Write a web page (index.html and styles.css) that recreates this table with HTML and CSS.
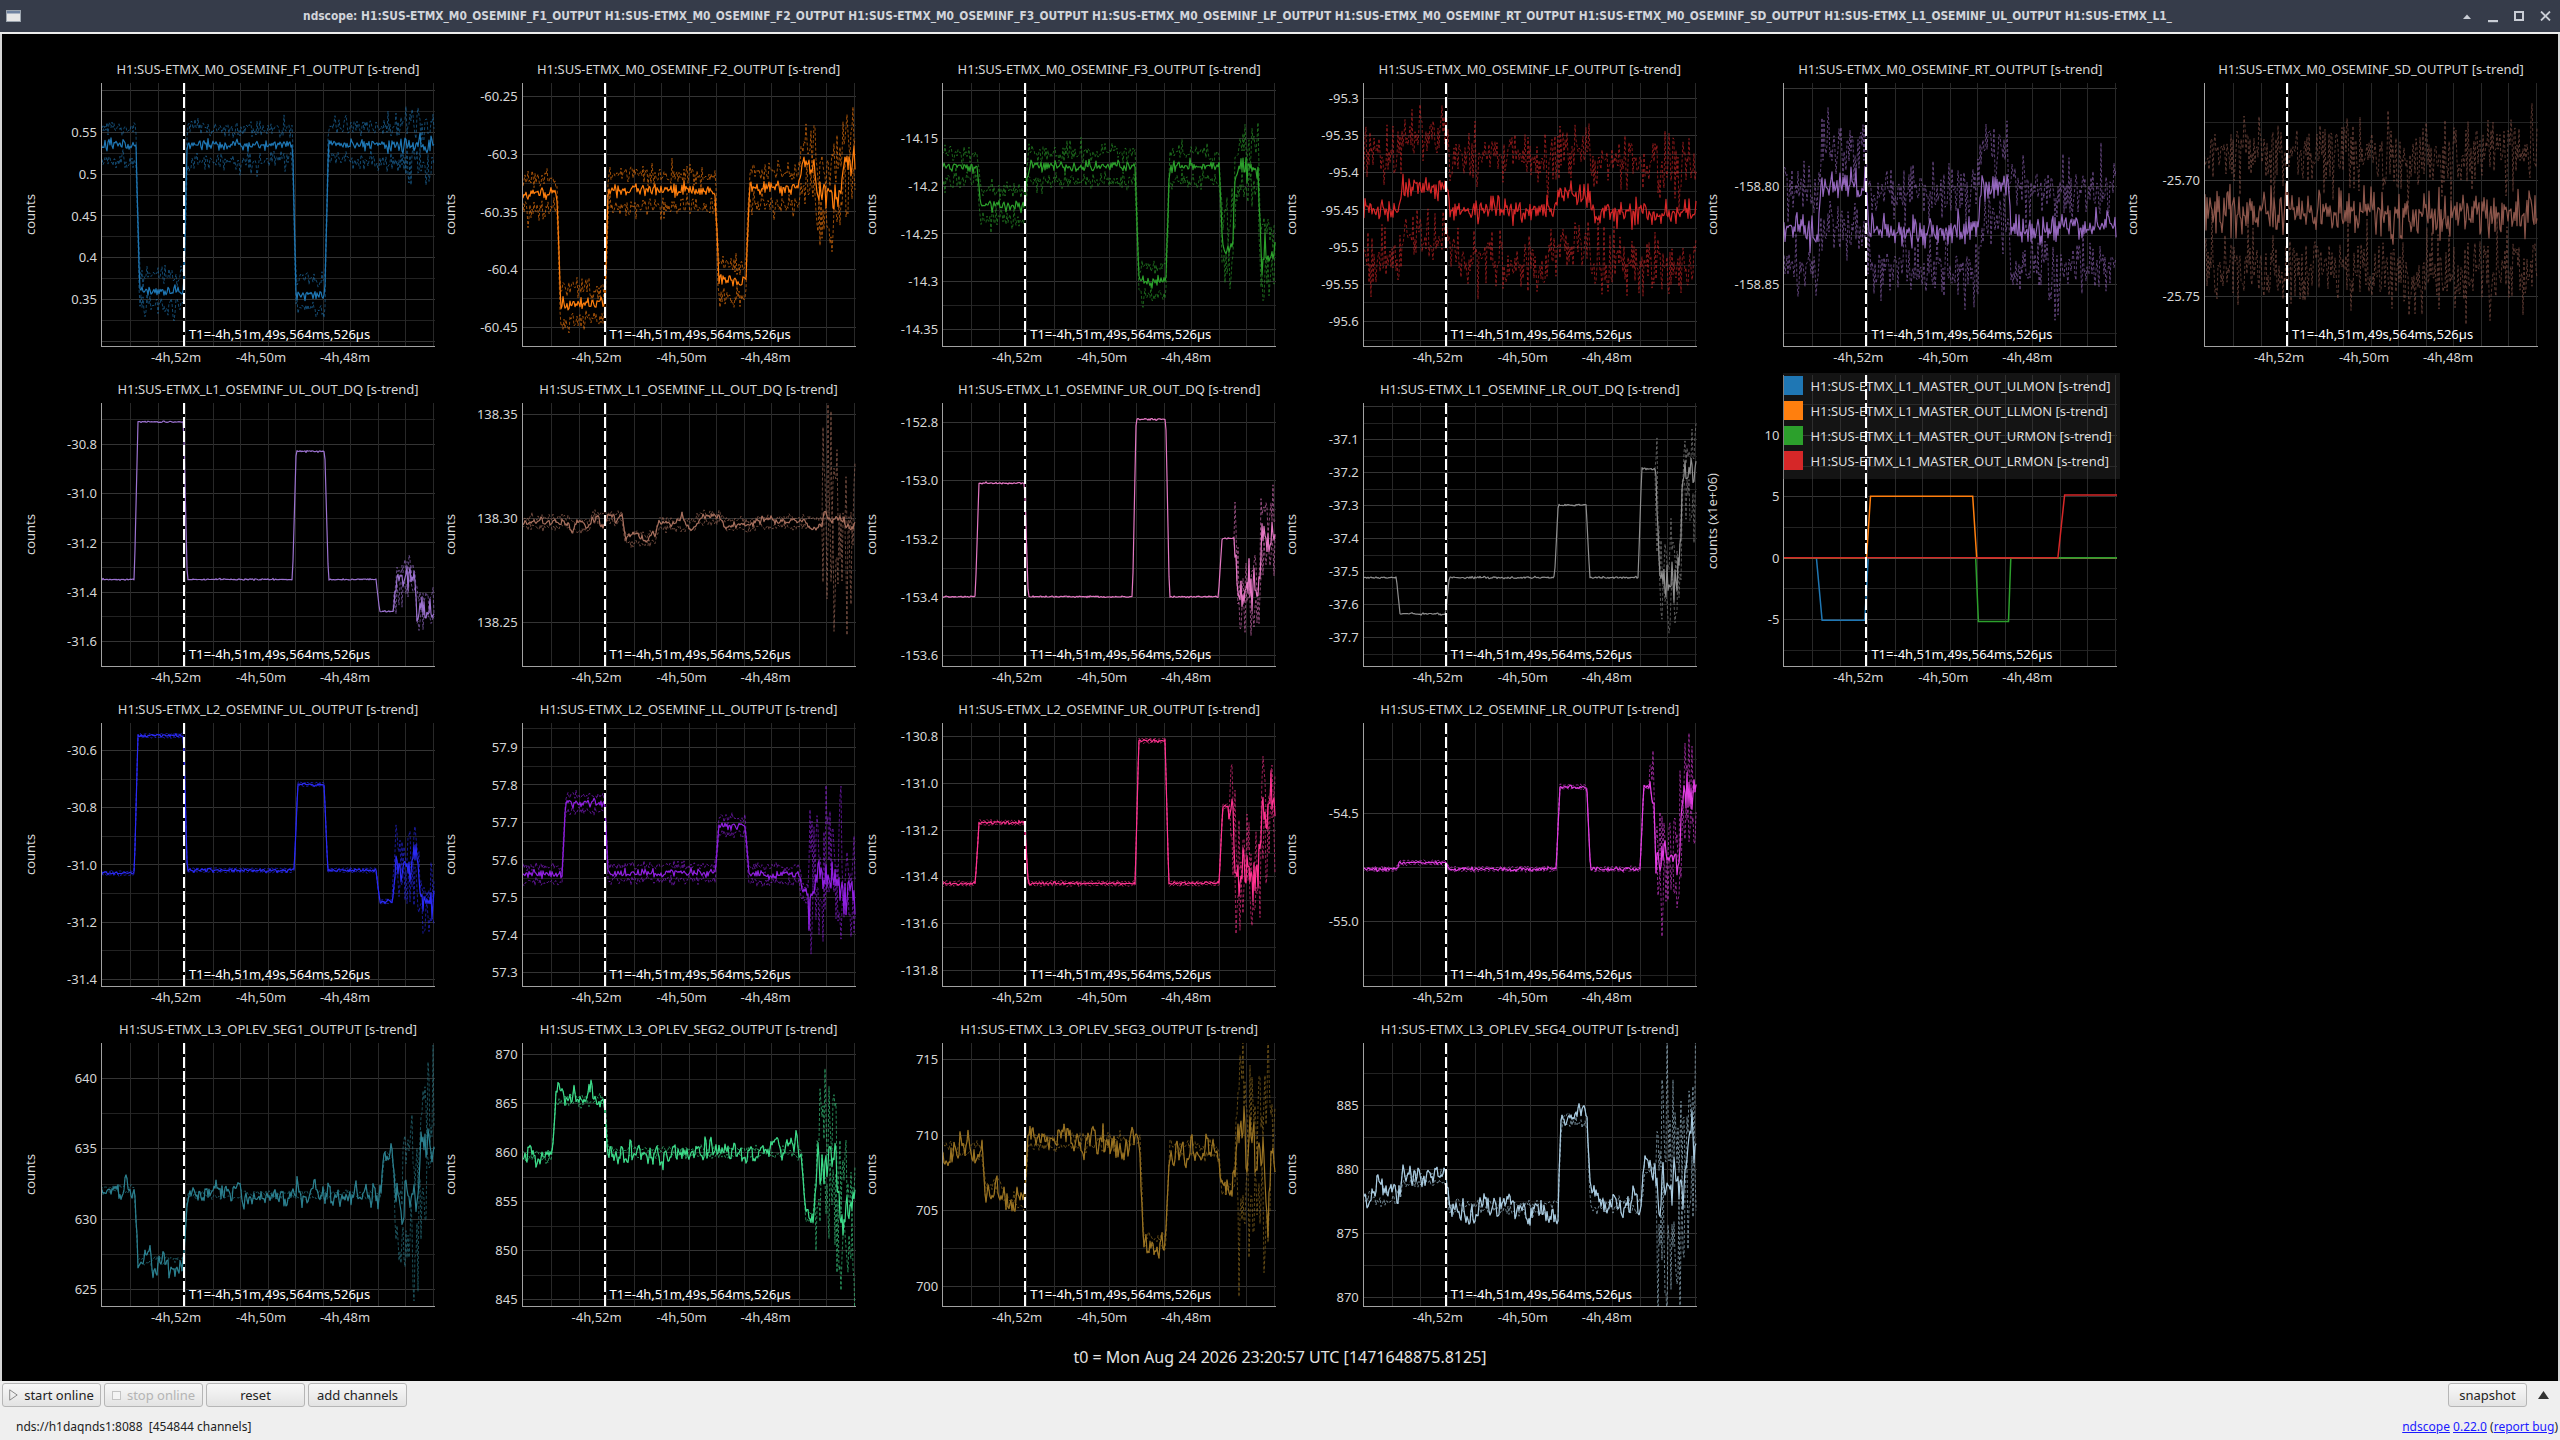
FILE: index.html
```html
<!DOCTYPE html>
<html lang="en">
<head>
<meta charset="utf-8">
<title>ndscope</title>
<link rel="stylesheet" href="styles.css">
</head>
<body>
<div class="window">
  <header class="titlebar">
    <svg class="appicon" width="15" height="12" viewBox="0 0 15 12"><rect x="0.5" y="0.5" width="14" height="11" fill="#e6e6e6" stroke="#9aa3ad"/><rect x="1" y="1" width="13" height="2.5" fill="#6f82a0"/></svg>
    <div class="wintitle">ndscope: H1:SUS-ETMX_M0_OSEMINF_F1_OUTPUT H1:SUS-ETMX_M0_OSEMINF_F2_OUTPUT H1:SUS-ETMX_M0_OSEMINF_F3_OUTPUT H1:SUS-ETMX_M0_OSEMINF_LF_OUTPUT H1:SUS-ETMX_M0_OSEMINF_RT_OUTPUT H1:SUS-ETMX_M0_OSEMINF_SD_OUTPUT H1:SUS-ETMX_L1_OSEMINF_UL_OUTPUT H1:SUS-ETMX_L1_</div>
    <div class="winbtns">
      <span class="wb"><svg width="8" height="5" viewBox="0 0 8 5"><path d="M0 5 L4 0.5 L8 5 Z" fill="#c9cdd5"/></svg></span>
      <span class="wb"><svg width="10" height="16" viewBox="0 0 10 16"><rect x="0" y="12" width="10" height="2.2" fill="#c9cdd5"/></svg></span>
      <span class="wb"><svg width="10" height="10" viewBox="0 0 10 10"><rect x="1" y="1" width="8" height="8" fill="none" stroke="#c9cdd5" stroke-width="2"/></svg></span>
      <span class="wb"><svg width="11" height="10" viewBox="0 0 11 10"><path d="M1 0.5 L10 9.5 M10 0.5 L1 9.5" stroke="#c9cdd5" stroke-width="1.8"/></svg></span>
    </div>
  </header>
  <div class="frameline"></div>
  <main class="scope">
    <div class="plots" id="plots"></div>
    <div class="t0">t0 = Mon Aug 24 2026 23:20:57 UTC [1471648875.8125]</div>
  </main>
  <div class="toolbar">
    <div class="tb-left">
      <button class="btn"><svg width="9" height="12" viewBox="0 0 9 12"><path d="M0.7 0.8 L8.2 6 L0.7 11.2 Z" fill="none" stroke="#8a8a8a" stroke-width="1"/></svg><span>start online</span></button>
      <button class="btn disabled"><svg width="9" height="9" viewBox="0 0 9 9"><rect x="0.5" y="0.5" width="8" height="8" fill="#f4f4f4" stroke="#c4c4c4"/></svg><span>stop online</span></button>
      <button class="btn"><span>reset</span></button>
      <button class="btn"><span>add channels</span></button>
    </div>
    <div class="tb-right">
      <button class="btn snap"><span>snapshot</span></button>
      <span class="uparrow"><svg width="11" height="8" viewBox="0 0 11 8"><path d="M0 8 L5.5 0 L11 8 Z" fill="#333"/></svg></span>
    </div>
  </div>
  <div class="status">
    <span class="server">nds://h1daqnds1:8088&nbsp; [454844 channels]</span>
    <span class="links"><a href="#">ndscope</a> <a href="#">0.22.0</a> (<a href="#">report bug</a>)</span>
  </div>
</div>
<script src="app.js"></script>
</body>
</html>
```

FILE: styles.css
```css
* { box-sizing: border-box; }
html, body { margin: 0; padding: 0; background: #000; }
body {
  width: 2560px; height: 1440px; overflow: hidden;
  font-family: "Noto Sans", "DejaVu Sans", sans-serif;
}
.window {
  width: 2560px; height: 1440px;
  display: flex; flex-direction: column;
  background: #d6d6d6;
}
.titlebar {
  height: 32px; flex: none;
  background: #363c4a;
  display: flex; align-items: center;
  color: #d2d5db;
}
.appicon { flex: none; margin-left: 6px; }
.wintitle {
  flex: 1; min-width: 0;
  text-align: center;
  font-family: "DejaVu Sans Condensed", "DejaVu Sans", sans-serif;
  font-stretch: condensed;
  font-weight: bold; font-size: 11.85px;
  white-space: nowrap; overflow: hidden;
}
.winbtns { flex: none; display: flex; padding-right: 2px; }
.wb { width: 26px; height: 32px; display: flex; align-items: center; justify-content: center; }
.frameline { height: 2px; flex: none; background: #ececec; }

.scope {
  flex: none; height: 1347px;
  margin: 0 2px;
  background: #000;
  padding-top: 21px;
}
.plots {
  display: grid;
  grid-template-columns: repeat(6, 420.6px);
  grid-template-rows: repeat(4, 320px);
  padding-left: 13px;
}
.cell { position: relative; display: flex; flex-direction: column; }
.ptitle {
  height: 28px; line-height: 28px;
  margin-left: 86px; width: 334px;
  text-align: center;
  font-size: 13px; color: #d6d6d6;
  white-space: nowrap;
}
.pbody { display: flex; height: 264px; }
.notitle .pbody { height: 292px; }
.ylab { width: 29px; display: flex; align-items: center; justify-content: center; }
.ylab span {
  writing-mode: vertical-rl; transform: rotate(180deg);
  font-size: 13px; color: #d6d6d6; white-space: nowrap;
}
.yticks { width: 57px; position: relative; }
.yt {
  position: absolute; right: 4px;
  font-size: 13px; line-height: 18px; color: #d6d6d6;
  white-space: nowrap;
}
.plot { width: 334px; height: 100%; position: relative; }
.plot svg { display: block; position: absolute; left: 0; top: 0; }
.cursor {
  position: absolute; left: 82px; top: 0; bottom: 0; width: 2px;
  background: repeating-linear-gradient(to bottom, #fff 0 11px, transparent 11px 14px);
  z-index: 3;
}
.t1 {
  position: absolute; left: 88px; bottom: 4px;
  font-size: 13px; line-height: 18px; color: #fff;
  white-space: nowrap; z-index: 2;
}
.xticks { height: 28px; margin-left: 86px; width: 334px; position: relative; }
.xt {
  position: absolute; top: 1px;
  font-size: 13px; line-height: 18px; color: #d6d6d6;
  transform: translateX(-50%); white-space: nowrap;
}
.legend {
  position: absolute; left: 0; top: -2px;
  padding: 0 8px 6px 1px;
  background: rgba(58, 58, 58, 0.35);
  z-index: 2;
}
.lg-row {
  height: 25px; display: flex; align-items: center; gap: 7px;
  font-size: 13px; color: #dedede; white-space: nowrap;
}
.sw { width: 19px; height: 19px; flex: none; }

.t0 {
  height: 24px; margin-top: 10px; line-height: 24px;
  text-align: center; font-size: 16px; color: #e2e2e2;
}

.toolbar {
  height: 29px; flex: none;
  background: #efefef;
  display: flex; justify-content: space-between; align-items: flex-start;
  padding: 2px 0 0 2px;
}
.tb-left { display: flex; gap: 3px; }
.tb-right { display: flex; align-items: center; }
.btn {
  height: 24px; width: 99px; padding: 0;
  border: 1px solid #b6b6b6; border-radius: 3px;
  background: linear-gradient(#f8f8f8, #e3e3e3);
  font-family: "Noto Sans", "DejaVu Sans", sans-serif;
  font-size: 13px; color: #222;
  display: flex; align-items: center; justify-content: center; gap: 6px;
}
.btn.disabled { color: #b4b4b4; }
.btn.snap { width: 79px; }
.uparrow { width: 33px; height: 24px; display: flex; align-items: center; justify-content: center; }

.status {
  height: 30px; flex: none;
  background: #efefef;
  display: flex; justify-content: space-between; align-items: flex-start;
  padding: 8px 2px 0 16px;
  font-size: 12px; line-height: 18px; color: #222;
}
.links a { color: #1a1aff; text-decoration: underline; }
```

FILE: app.js
```js
(function () {
  var W = 334;
  var NS = 'http://www.w3.org/2000/svg';

  function rng(seed) {
    return function () {
      seed |= 0; seed = seed + 0x6D2B79F5 | 0;
      var t = Math.imul(seed ^ seed >>> 15, 1 | seed);
      t = t + Math.imul(t ^ t >>> 7, 61 | t) ^ t;
      return ((t ^ t >>> 14) >>> 0) / 4294967296;
    };
  }
  function gaussF(r) {
    return function () {
      var u = 0; while (u === 0) u = r();
      var v = r();
      return Math.sqrt(-2 * Math.log(u)) * Math.cos(2 * Math.PI * v);
    };
  }
  function level(segs, f, ramp) {
    var L = segs[0][1];
    for (var i = 1; i < segs.length; i++) {
      var s = segs[i][0], v = segs[i][1], p = segs[i - 1][1];
      if (f <= s) break;
      if (f < s + ramp) { L = p + (v - p) * (f - s) / ramp; break; }
      L = v;
    }
    return L;
  }
  function sv(tag, attrs, parent) {
    var e = document.createElementNS(NS, tag);
    for (var k in attrs) e.setAttribute(k, attrs[k]);
    if (parent) parent.appendChild(e);
    return e;
  }
  function div(cls, parent, text) {
    var d = document.createElement('div');
    d.className = cls;
    if (text !== undefined) d.textContent = text;
    if (parent) parent.appendChild(d);
    return d;
  }

  var P = [
    { t: 'H1:SUS-ETMX_M0_OSEMINF_F1_OUTPUT [s-trend]', c: '#1f77b4',
      ticks: ['0.55', '0.5', '0.45', '0.4', '0.35'], r: [0.55, 49, 0.35, 216],
      segs: [[0, 0.535], [0.105, 0.36], [0.248, 0.535], [0.575, 0.355], [0.672, 0.535]],
      mn: 0.003, bw: 0.019, bn: 0.006, ef: 0.86, emn: 0.006, ebw: 0.024, ebn: 0.01 },
    { t: 'H1:SUS-ETMX_M0_OSEMINF_F2_OUTPUT [s-trend]', c: '#ff7f0e',
      ticks: ['-60.25', '-60.3', '-60.35', '-60.4', '-60.45'], r: [-60.25, 13, -60.45, 244],
      segs: [[0, -60.335], [0.105, -60.43], [0.248, -60.332], [0.58, -60.41], [0.672, -60.33], [0.83, -60.31], [0.875, -60.335], [0.955, -60.305]],
      mn: 0.003, bw: 0.014, bn: 0.005, ef: 0.84, emn: 0.006, ebw: 0.02, ebn: 0.012 },
    { t: 'H1:SUS-ETMX_M0_OSEMINF_F3_OUTPUT [s-trend]', c: '#2ca02c',
      ticks: ['-14.15', '-14.2', '-14.25', '-14.3', '-14.35'], r: [-14.15, 55, -14.35, 246],
      segs: [[0, -14.18], [0.105, -14.22], [0.248, -14.18], [0.58, -14.30], [0.672, -14.18], [0.832, -14.26], [0.872, -14.18], [0.948, -14.27]],
      mn: 0.003, bw: 0.015, bn: 0.005, ef: 0.84, emn: 0.007, ebw: 0.025, ebn: 0.014 },
    { t: 'H1:SUS-ETMX_M0_OSEMINF_LF_OUTPUT [s-trend]', c: '#d62728',
      ticks: ['-95.3', '-95.35', '-95.4', '-95.45', '-95.5', '-95.55', '-95.6'], r: [-95.3, 15, -95.6, 238],
      segs: [[0, -95.45], [0.11, -95.42], [0.25, -95.45], [0.58, -95.43], [0.68, -95.455]],
      mn: 0.008, bw: 0.068, bn: 0.02 },
    { t: 'H1:SUS-ETMX_M0_OSEMINF_RT_OUTPUT [s-trend]', c: '#9467bd',
      ticks: ['-158.80', '-158.85'], r: [-158.80, 103, -158.85, 201],
      segs: [[0, -158.822], [0.105, -158.80], [0.248, -158.823], [0.585, -158.80], [0.675, -158.822]],
      mn: 0.004, bw: 0.02, bn: 0.008 },
    { t: 'H1:SUS-ETMX_M0_OSEMINF_SD_OUTPUT [s-trend]', c: '#8c564b',
      ticks: ['-25.70', '-25.75'], r: [-25.70, 97, -25.75, 213],
      segs: [[0, -25.713], [0.5, -25.716], [0.8, -25.713]],
      mn: 0.005, bw: 0.025, bn: 0.008 },

    { t: 'H1:SUS-ETMX_L1_OSEMINF_UL_OUT_DQ [s-trend]', c: '#9b72cf',
      ticks: ['-30.8', '-31.0', '-31.2', '-31.4', '-31.6'], r: [-30.8, 41, -31.6, 238],
      segs: [[0, -31.35], [0.1, -30.71], [0.248, -31.35], [0.575, -30.83], [0.672, -31.35], [0.826, -31.48], [0.878, -31.35], [0.94, -31.48]],
      mn: 0.0015, bw: 0, bn: 0, ef: 0.878, emn: 0.025, ebw: 0.04, ebn: 0.04 },
    { t: 'H1:SUS-ETMX_L1_OSEMINF_LL_OUT_DQ [s-trend]', c: '#a8705e',
      ticks: ['138.35', '138.30', '138.25'], r: [138.35, 11, 138.25, 219],
      segs: [[0, 138.298], [0.14, 138.296], [0.2, 138.3], [0.3, 138.29], [0.4, 138.297], [0.52, 138.3], [0.6, 138.297], [0.7, 138.298]],
      mn: 0.0015, sm: 0.75, bw: 0.002, bn: 0.001, ef: 0.9, emn: 0.002, ebw: 0.004, ebn: 0.03 },
    { t: 'H1:SUS-ETMX_L1_OSEMINF_UR_OUT_DQ [s-trend]', c: '#e377c2',
      ticks: ['-152.8', '-153.0', '-153.2', '-153.4', '-153.6'], r: [-152.8, 19, -153.6, 252],
      segs: [[0, -153.4], [0.1, -153.01], [0.248, -153.4], [0.572, -152.79], [0.672, -153.4], [0.83, -153.2], [0.88, -153.4], [0.95, -153.2]],
      mn: 0.0015, bw: 0, bn: 0, ef: 0.878, emn: 0.035, ebw: 0.06, ebn: 0.06 },
    { t: 'H1:SUS-ETMX_L1_OSEMINF_LR_OUT_DQ [s-trend]', c: '#8e8e8e',
      ticks: ['-37.1', '-37.2', '-37.3', '-37.4', '-37.5', '-37.6', '-37.7'], r: [-37.1, 36, -37.7, 234],
      segs: [[0, -37.52], [0.1, -37.63], [0.248, -37.52], [0.575, -37.30], [0.67, -37.52], [0.826, -37.19], [0.88, -37.52], [0.95, -37.2]],
      mn: 0.0015, bw: 0, bn: 0, ef: 0.878, emn: 0.03, ebw: 0.06, ebn: 0.06 },
    { legend: true, ylabel: 'counts (x1e+06)',
      ticks: ['10', '5', '0', '-5'], r: [10, 60, -5, 244] },
    null,

    { t: 'H1:SUS-ETMX_L2_OSEMINF_UL_OUTPUT [s-trend]', c: '#2a2af5',
      ticks: ['-30.6', '-30.8', '-31.0', '-31.2', '-31.4'], r: [-30.6, 27, -31.4, 256],
      segs: [[0, -31.03], [0.1, -30.55], [0.248, -31.02], [0.58, -30.72], [0.67, -31.02], [0.826, -31.13], [0.875, -31.0], [0.95, -31.14]],
      mn: 0.003, bw: 0.006, bn: 0.002, ef: 0.875, emn: 0.03, ebw: 0.05, ebn: 0.05 },
    { t: 'H1:SUS-ETMX_L2_OSEMINF_LL_OUTPUT [s-trend]', c: '#9020e0',
      ticks: ['57.9', '57.8', '57.7', '57.6', '57.5', '57.4', '57.3'], r: [57.9, 24, 57.3, 249],
      segs: [[0, 57.56], [0.12, 57.75], [0.248, 57.565], [0.58, 57.69], [0.67, 57.56], [0.832, 57.51], [0.878, 57.56], [0.95, 57.51]],
      mn: 0.006, bw: 0.02, bn: 0.006, ef: 0.86, emn: 0.03, ebw: 0.06, ebn: 0.08 },
    { t: 'H1:SUS-ETMX_L2_OSEMINF_UR_OUTPUT [s-trend]', c: '#ff3390',
      ticks: ['-130.8', '-131.0', '-131.2', '-131.4', '-131.6', '-131.8'], r: [-130.8, 13, -131.8, 247],
      segs: [[0, -131.43], [0.1, -131.17], [0.248, -131.43], [0.58, -130.82], [0.67, -131.43], [0.832, -131.1], [0.872, -131.4], [0.95, -131.1]],
      mn: 0.003, bw: 0.008, bn: 0.003, ef: 0.86, emn: 0.05, ebw: 0.08, ebn: 0.1 },
    { t: 'H1:SUS-ETMX_L2_OSEMINF_LR_OUTPUT [s-trend]', c: '#e23ee2',
      ticks: ['-54.5', '-55.0'], r: [-54.5, 90, -55.0, 198],
      segs: [[0, -54.76], [0.1, -54.73], [0.248, -54.76], [0.58, -54.38], [0.672, -54.76], [0.832, -54.38], [0.87, -54.72], [0.95, -54.4]],
      mn: 0.004, bw: 0.008, bn: 0.003, ef: 0.86, emn: 0.05, ebw: 0.08, ebn: 0.1 },
    null, null,

    { t: 'H1:SUS-ETMX_L3_OPLEV_SEG1_OUTPUT [s-trend]', c: '#2b7f8e',
      ticks: ['640', '635', '630', '625'], r: [640, 35, 625, 246],
      segs: [[0, 632.1], [0.1, 627], [0.248, 631.7], [0.84, 634.5], [0.875, 631], [0.95, 636]],
      mn: 0.45, sm: 0.6, bw: 0.15, bn: 0.1, ef: 0.88, emn: 1.0, ebw: 2.5, ebn: 2.2 },
    { t: 'H1:SUS-ETMX_L3_OPLEV_SEG2_OUTPUT [s-trend]', c: '#3ddc8a',
      ticks: ['870', '865', '860', '855', '850', '845'], r: [870, 11, 845, 256],
      segs: [[0, 859.6], [0.09, 865.3], [0.248, 860], [0.84, 853.5], [0.875, 860], [0.94, 853.5]],
      mn: 0.7, sm: 0.6, bw: 0.3, bn: 0.2, ef: 0.88, emn: 1.5, ebw: 3, ebn: 3 },
    { t: 'H1:SUS-ETMX_L3_OPLEV_SEG3_OUTPUT [s-trend]', c: '#9a7322',
      ticks: ['715', '710', '705', '700'], r: [715, 16, 700, 243],
      segs: [[0, 709], [0.12, 706.5], [0.18, 705.5], [0.248, 709.5], [0.595, 703], [0.672, 709], [0.83, 706.5], [0.875, 709]],
      mn: 0.6, sm: 0.6, bw: 0.25, bn: 0.2, ef: 0.88, emn: 1.2, ebw: 3, ebn: 2.2 },
    { t: 'H1:SUS-ETMX_L3_OPLEV_SEG4_OUTPUT [s-trend]', c: '#a9cbe0',
      ticks: ['885', '880', '875', '870'], r: [885, 62, 870, 254],
      segs: [[0, 877.8], [0.11, 879.2], [0.248, 877], [0.585, 883.8], [0.672, 877.2], [0.835, 880], [0.88, 878], [0.96, 882]],
      mn: 0.6, sm: 0.6, bw: 0.25, bn: 0.2, ef: 0.88, emn: 1.5, ebw: 3.5, ebn: 3 }
  ];

  var LEG = [
    { name: 'H1:SUS-ETMX_L1_MASTER_OUT_ULMON [s-trend]', c: '#1f77b4',
      pts: [[0, 0], [0.1, 0], [0.117, -5.1], [0.245, -5.1], [0.255, 0], [1, 0]] },
    { name: 'H1:SUS-ETMX_L1_MASTER_OUT_LLMON [s-trend]', c: '#ff7f0e',
      pts: [[0, 0], [0.25, 0], [0.262, 5], [0.568, 5], [0.58, 0], [1, 0]] },
    { name: 'H1:SUS-ETMX_L1_MASTER_OUT_URMON [s-trend]', c: '#2ca02c',
      pts: [[0, 0], [0.577, 0], [0.585, -5.2], [0.675, -5.2], [0.682, 0], [1, 0]] },
    { name: 'H1:SUS-ETMX_L1_MASTER_OUT_LRMON [s-trend]', c: '#d62728',
      pts: [[0, 0], [0.823, 0], [0.843, 5.1], [1, 5.1]] }
  ];

  var XT = [[75, '-4h,52m'], [160, '-4h,50m'], [244, '-4h,48m']];

  function buildCell(cfg, idx) {
    var cell = div('cell');
    if (!cfg) { cell.classList.add('empty'); return cell; }
    var ph = cfg.legend ? 292 : 264;
    if (cfg.legend) cell.classList.add('notitle');
    else div('ptitle', cell, cfg.t);

    var body = div('pbody', cell);
    var yl = div('ylab', body);
    var sp = document.createElement('span');
    sp.textContent = cfg.ylabel || 'counts';
    yl.appendChild(sp);
    var yt = div('yticks', body);
    var plot = div('plot', body);

    var v1 = cfg.r[0], y1 = cfg.r[1], v2 = cfg.r[2], y2 = cfg.r[3];
    var s = (y2 - y1) / (v1 - v2);
    function Y(v) { return y1 + (v1 - v) * s; }

    cfg.ticks.forEach(function (tx) {
      var l = div('yt', yt, tx);
      l.style.top = (Y(parseFloat(tx)) - 9).toFixed(1) + 'px';
    });

    var svg = sv('svg', { width: W, height: ph, viewBox: '0 0 ' + W + ' ' + ph });
    plot.appendChild(svg);

    var step = Math.abs(parseFloat(cfg.ticks[0]) - parseFloat(cfg.ticks[1])) / 2;
    var vmax = v1 + y1 / s, vmin = v1 - (ph - y1) / s;
    var k0 = Math.ceil(vmin / step - 1e-9), k1 = Math.floor(vmax / step + 1e-9);
    for (var k = k0; k <= k1; k++) {
      var v = k * step, q = v / (2 * step);
      var major = Math.abs(q - Math.round(q)) < 1e-6;
      var yy = Math.round(Y(v)) + 0.5;
      sv('line', { x1: 0, x2: W, y1: yy, y2: yy, stroke: major ? '#343434' : '#222222', 'stroke-width': 1 }, svg);
    }
    for (var g = 0; g < 12; g++) {
      var xx = Math.round(29 + 27.5 * g) + 0.5;
      sv('line', { x1: xx, x2: xx, y1: 0, y2: ph, stroke: '#282828', 'stroke-width': 1 }, svg);
    }

    if (cfg.legend) {
      LEG.forEach(function (tr) {
        var pts = tr.pts.map(function (p) { return (p[0] * W).toFixed(1) + ',' + Y(p[1]).toFixed(1); }).join(' ');
        sv('polyline', { points: pts, fill: 'none', stroke: tr.c, 'stroke-width': 1.5 }, svg);
      });
      var lg = div('legend', plot);
      LEG.forEach(function (tr) {
        var row = div('lg-row', lg);
        var sw = div('sw', row);
        sw.style.background = tr.c;
        var tx = document.createElement('span');
        tx.textContent = tr.name;
        row.appendChild(tx);
      });
    } else {
      var r = rng(1013 + idx * 7919), gs = gaussF(r);
      var N = W, sm = cfg.sm || 0, n = 0;
      var mean = [], up = [], lo = [];
      var ef = cfg.ef || 2;
      for (var i = 0; i < N; i++) {
        var f = i / (N - 1);
        var L = level(cfg.segs, f, 0.011);
        var end = f >= ef;
        n = sm * n + Math.sqrt(1 - sm * sm) * gs();
        var m = L + (end ? cfg.emn : cfg.mn) * n;
        var bw = end ? cfg.ebw : cfg.bw, bn = end ? cfg.ebn : cfg.bn;
        var u = L + bw + gs() * bn, d = L - bw - gs() * bn;
        if (u < m) u = m; if (d > m) d = m;
        mean.push(i + ',' + Y(m).toFixed(1));
        up.push(i + ',' + Y(u).toFixed(1));
        lo.push(i + ',' + Y(d).toFixed(1));
      }
      var start = cfg.bw > 0 ? 0 : Math.max(0, Math.floor(ef * (N - 1)) - 1);
      if (start < N) {
        [up, lo].forEach(function (arr) {
          sv('polyline', { points: arr.slice(start).join(' '), fill: 'none', stroke: cfg.c,
            'stroke-width': 1, 'stroke-dasharray': '3 2', opacity: 0.6 }, svg);
        });
      }
      sv('polyline', { points: mean.join(' '), fill: 'none', stroke: cfg.c, 'stroke-width': 1.2,
        'stroke-linejoin': 'round' }, svg);
    }

    sv('line', { x1: 0.5, x2: 0.5, y1: 0, y2: ph, stroke: '#a2a2a2', 'stroke-width': 1 }, svg);
    sv('line', { x1: 0, x2: W, y1: ph - 0.5, y2: ph - 0.5, stroke: '#a2a2a2', 'stroke-width': 1 }, svg);

    div('cursor', plot);
    div('t1', plot, 'T1=-4h,51m,49s,564ms,526\u00b5s');

    var xt = div('xticks', cell);
    XT.forEach(function (p) {
      var l = div('xt', xt, p[1]);
      l.style.left = p[0] + 'px';
    });
    return cell;
  }

  var host = document.getElementById('plots');
  P.forEach(function (cfg, i) { host.appendChild(buildCell(cfg, i)); });
})();
```
